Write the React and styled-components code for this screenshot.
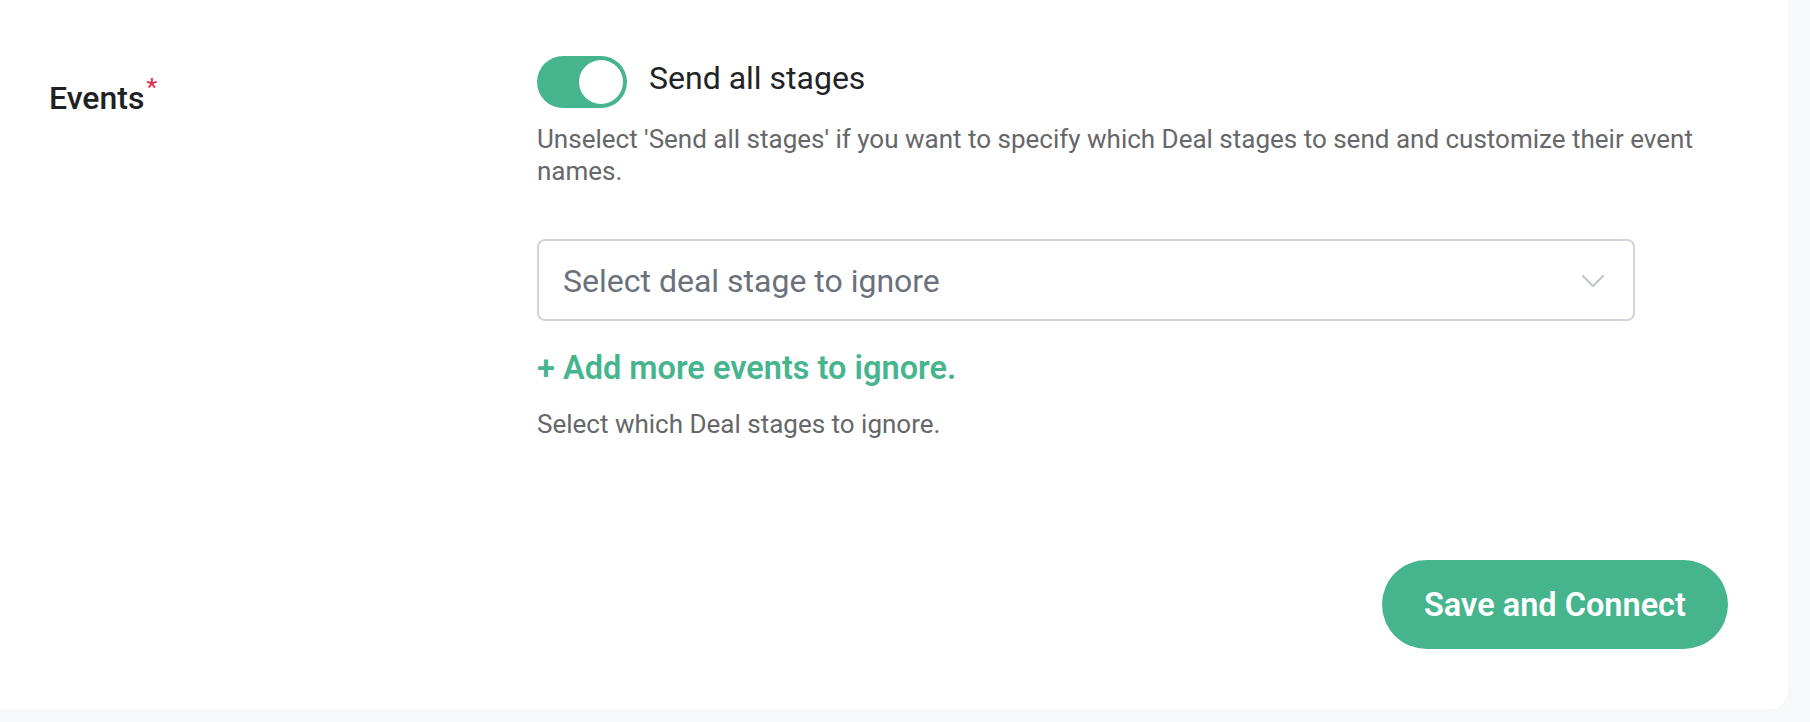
import React, {useState} from 'react'
import styled, {createGlobalStyle} from 'styled-components'

const GlobalStyle = createGlobalStyle`
  html, body {
    margin: 0;
    padding: 0;
    background: #f7f8fa;
    font-family: Roboto, "Liberation Sans", sans-serif;
  }
`

const Page = styled.div`
  width: 1810px;
  height: 722px;
  background: #f7f8fa;
  overflow: hidden;
`

const Card = styled.div`
  width: 1788px;
  height: 709px;
  box-sizing: border-box;
  background: #ffffff;
  border-bottom-right-radius: 18px;
  padding: 56px 60px 0 49px;
  display: flex;
  flex-direction: column;
`

const FieldRow = styled.div`
  display: flex;
`

const Label = styled.div`
  width: 488px;
  flex-shrink: 0;
  margin-top: 22px;
  font-size: 32px;
  line-height: 40px;
  font-weight: 500;
  color: #202124;
`

const Required = styled.span`
  color: #e0304e;
  font-size: 24px;
  line-height: 0;
  vertical-align: 14px;
  margin-left: 2px;
`

const Controls = styled.div`
  display: flex;
  flex-direction: column;
  width: 1180px;
`

const ToggleRow = styled.div`
  display: flex;
  align-items: flex-start;
  gap: 22px;
`

const Track = styled.button`
  width: 90px;
  height: 52px;
  border: none;
  padding: 0;
  border-radius: 26px;
  background: ${p => (p.$on ? '#46b58e' : '#d5d9df')};
  position: relative;
  cursor: pointer;
  flex-shrink: 0;
`

const Knob = styled.span`
  position: absolute;
  top: 4px;
  left: ${p => (p.$on ? '42px' : '4px')};
  width: 44px;
  height: 44px;
  border-radius: 50%;
  background: #ffffff;
  transition: left 0.15s;
`

const ToggleText = styled.span`
  margin-top: 2px;
  font-size: 32px;
  line-height: 40px;
  color: #222326;
`

const Hint = styled.p`
  margin: ${p => p.$top || 0}px 0 0;
  font-size: 26px;
  line-height: 32px;
  color: #656769;
`

const SelectBox = styled.div`
  margin-top: 52px;
  width: 1098px;
  height: 82px;
  box-sizing: border-box;
  border: 2px solid #d0d5dd;
  border-radius: 8px;
  display: flex;
  align-items: center;
  justify-content: space-between;
  padding: 2px 29px 0 24px;
  cursor: pointer;
`

const Placeholder = styled.span`
  font-size: 32px;
  line-height: 40px;
  color: #6a717c;
`

const AddLink = styled.a`
  margin-top: 27px;
  font-size: 32.5px;
  line-height: 40px;
  font-weight: 600;
  color: #46b58e;
  text-decoration: none;
  cursor: pointer;
  align-self: flex-start;
`

const Footer = styled.div`
  margin-top: 120px;
  display: flex;
  justify-content: flex-end;
`

const SaveButton = styled.button`
  width: 346px;
  height: 89px;
  border: none;
  border-radius: 45px;
  background: #46b58e;
  color: #ffffff;
  font-family: Roboto, "Liberation Sans", sans-serif;
  font-size: 32.5px;
  font-weight: 600;
  padding: 0;
  cursor: pointer;
`

function Chevron() {
    return (
        <svg width="22" height="12" viewBox="0 0 22 12" fill="none">
            <path d="M1 1l10 10L21 1" stroke="#c2c7ce" strokeWidth="2.2" strokeLinecap="round" strokeLinejoin="round"/>
        </svg>
    )
}

export default function App() {
    const [sendAll, setSendAll] = useState(true)
    return (
        <Page>
            <GlobalStyle/>
            <Card>
                <FieldRow>
                    <Label>Events<Required>*</Required></Label>
                    <Controls>
                        <ToggleRow>
                            <Track $on={sendAll} onClick={() => setSendAll(!sendAll)}>
                                <Knob $on={sendAll}/>
                            </Track>
                            <ToggleText>Send all stages</ToggleText>
                        </ToggleRow>
                        <Hint $top={15}>
                            Unselect 'Send all stages' if you want to specify which Deal stages to send and customize their event names.
                        </Hint>
                        <SelectBox>
                            <Placeholder>Select deal stage to ignore</Placeholder>
                            <Chevron/>
                        </SelectBox>
                        <AddLink>+ Add more events to ignore.</AddLink>
                        <Hint $top={20}>Select which Deal stages to ignore.</Hint>
                    </Controls>
                </FieldRow>
                <Footer>
                    <SaveButton>Save and Connect</SaveButton>
                </Footer>
            </Card>
        </Page>
    )
}
